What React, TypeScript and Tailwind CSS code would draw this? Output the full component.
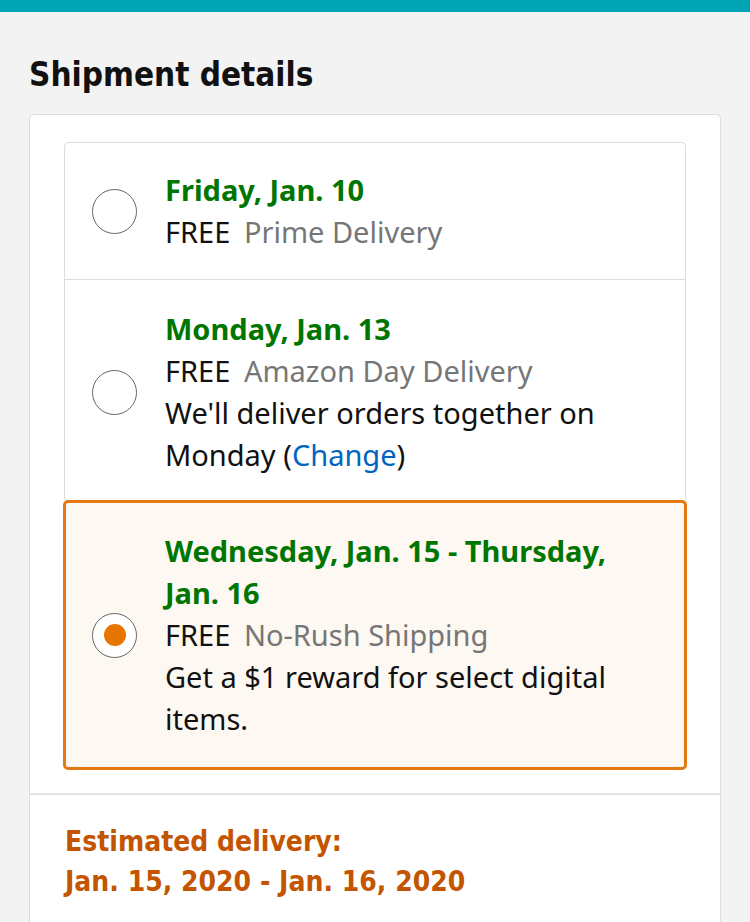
import React from "react";

const body = { fontFamily: '"Noto Sans", "Open Sans", sans-serif' };
const cond = { fontFamily: '"Liberation Sans Narrow", "DejaVu Sans Condensed", "Roboto Condensed", sans-serif' };

function Radio({ checked }: { checked?: boolean }) {
  return (
    <div className="w-[45px] h-[45px] shrink-0 rounded-full border-[1.5px] border-[#666666] bg-white flex items-center justify-center">
      {checked && <div className="w-[22px] h-[22px] rounded-full bg-[#e77600]" />}
    </div>
  );
}

export default function App() {
  return (
    <div className="min-h-screen bg-[#f3f3f3] text-[#111]" style={body}>
      <div className="h-[12px] bg-[#00a4b4]" />
      <h1 className="pl-[29px] pt-[43px] pb-[19px] text-[33px] leading-[40px] font-bold text-[#111]" style={cond}>
        Shipment details
      </h1>
      <div className="mx-[29px] bg-white border border-[#dddddd] rounded-t-[5px] border-b-0 min-h-[820px]">
        <div className="px-[34px] pt-[27px] pb-[23px]">
          <div className="border border-[#dddddd] rounded-t-[5px] border-b-0">
            <div className="flex items-center pl-[27px] pr-[48px] py-[26px] border-b border-[#dddddd]">
              <Radio />
              <div className="ml-[28px] flex-1 text-[29px] leading-[42px]">
                <div className="font-bold text-[#007600]">Friday, Jan. 10</div>
                <div>
                  FREE <span className="ml-[6px] text-[#767676]">Prime Delivery</span>
                </div>
              </div>
            </div>
            <div className="flex items-center pl-[27px] pr-[48px] pt-[28px] pb-[24px]">
              <Radio />
              <div className="ml-[28px] flex-1 text-[29px] leading-[42px]">
                <div className="font-bold text-[#007600]">Monday, Jan. 13</div>
                <div>
                  FREE <span className="ml-[6px] text-[#767676]">Amazon Day Delivery</span>
                </div>
                <div>We'll deliver orders together on</div>
                <div>
                  Monday (<span className="text-[#0066c0]">Change</span>)
                </div>
              </div>
            </div>
          </div>
          <div className="flex items-center -mx-[1px] pl-[26px] pr-[48px] pt-[27px] pb-[27px] border-[3px] border-[#e47911] rounded-[5px] bg-[#fdf8f1]">
            <Radio checked />
            <div className="ml-[28px] flex-1 text-[29px] leading-[42px]">
              <div className="font-bold text-[#007600]">Wednesday, Jan. 15 - Thursday, Jan. 16</div>
              <div>
                FREE <span className="ml-[6px] text-[#767676]">No-Rush Shipping</span>
              </div>
              <div>Get a $1 reward for select digital items.</div>
            </div>
          </div>
        </div>
        <div className="border-t-2 border-[#e3e3e3] px-[35px] pt-[27px] text-[28px] leading-[40px] font-bold text-[#c45500]" style={cond}>
          <div>Estimated delivery:</div>
          <div>Jan. 15, 2020 - Jan. 16, 2020</div>
        </div>
      </div>
    </div>
  );
}
